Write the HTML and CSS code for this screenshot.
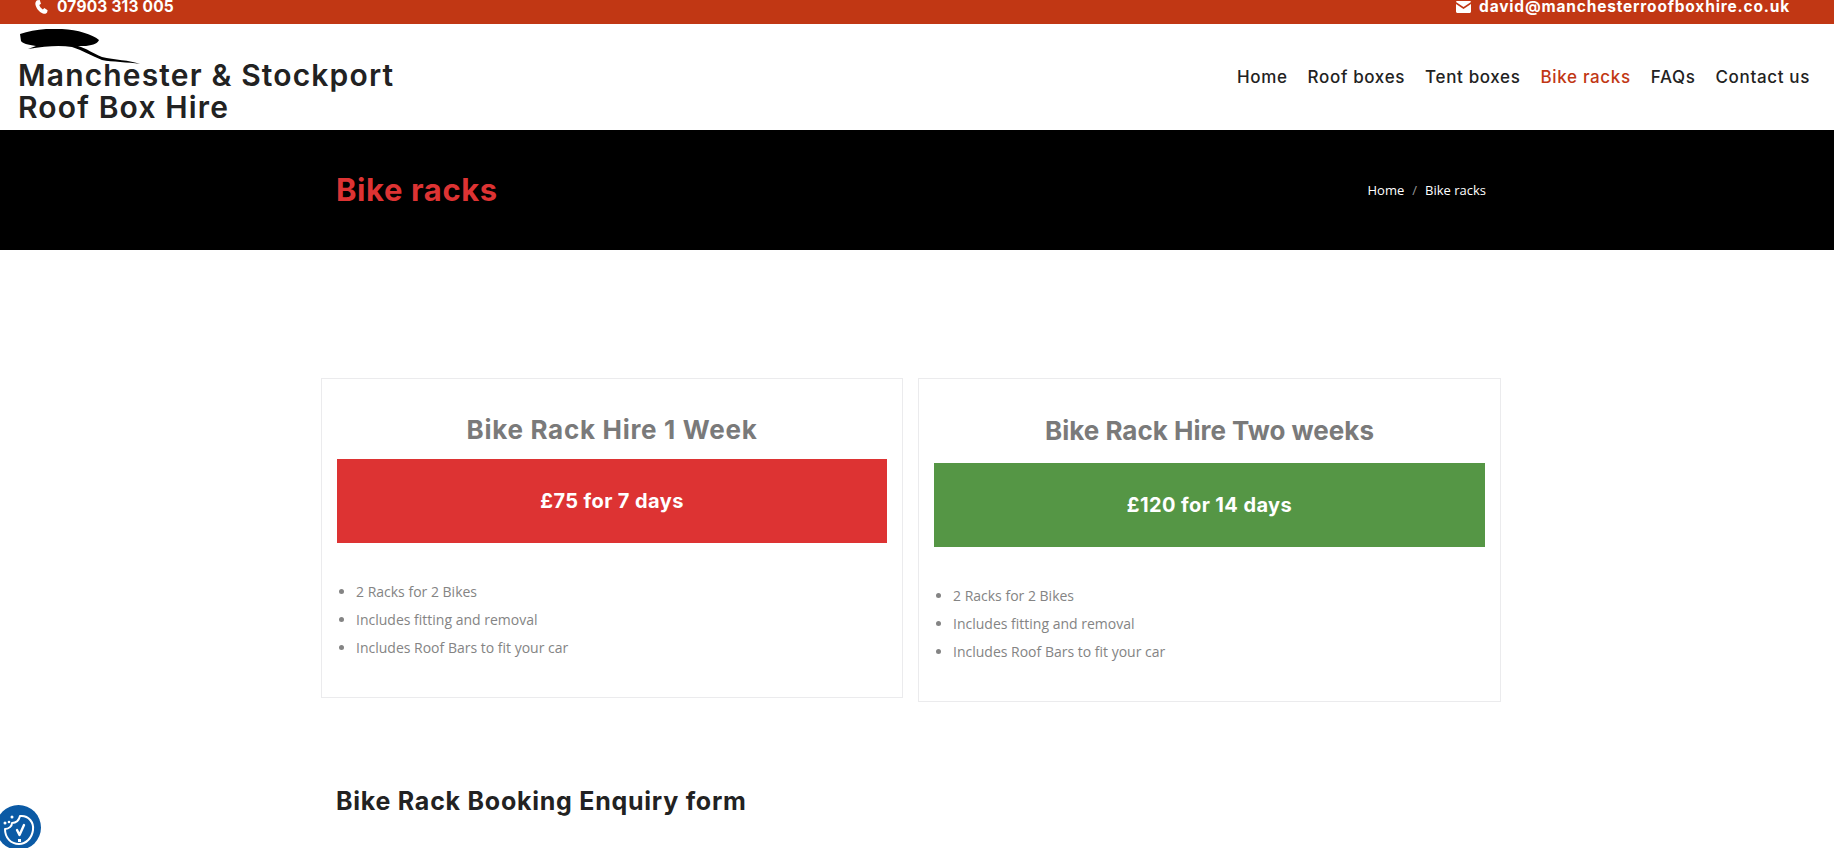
FILE: index.html
```html
<!DOCTYPE html>
<html lang="en">
<head>
    <meta charset="UTF-8">
    <meta name="viewport" content="width=device-width, initial-scale=1.0">
    <title>Bike racks - Manchester &amp; Stockport Roof Box Hire</title>
    <link rel="stylesheet" href="styles.css">
</head>
<body>
    <div class="top-bar">
        <a class="top-link top-phone" href="#">
            <svg class="top-icon" viewBox="0 0 16 16"><path d="M3.2 0.2 L6 0 L7.4 4.2 L5.5 5.8 C6 7.8 7.6 9.8 9.6 10.8 L11.2 9.2 L15 11.6 L14.4 14.2 C13.4 15.8 11.4 16.2 9.6 15.4 C5 13.4 1.8 9.2 1 4.8 C.8 2.8 1.6 1 3.2 0.2 Z"/></svg>
            07903 313 005
        </a>
        <a class="top-link top-mail" href="#">
            <svg class="top-icon" viewBox="0 0 16 13"><path d="M1.4 0 H14.6 C15.4 0 16 .6 16 1.2 L8 6.6 L0 1.2 C0 .6 .6 0 1.4 0 Z M0 3.2 L8 8.6 L16 3.2 V11.4 C16 12.3 15.3 13 14.4 13 H1.6 C.7 13 0 12.3 0 11.4 Z"/></svg>
            david@manchesterroofboxhire.co.uk
        </a>
    </div>

    <header class="site-header">
        <a class="logo" href="#">
            <svg class="logo-mark" viewBox="0 0 120 35"><path d="M0 5 C12 1 26 -1 42 0 C58 1 72 5 79 11 C78 14 74 16 66 17 C60 17 58 17 58 17 C66 19 74 25 82 28 C94 31 110 31 120 35 C108 33 92 33 82 31 C72 27 62 21 52 18 C40 16 26 17 8 20 L16 17 C8 16 2 14 1 12 Z"/></svg>
            <span class="logo-text">Manchester &amp; Stockport<br>Roof Box Hire</span>
        </a>
        <nav class="main-nav">
            <a href="#">Home</a>
            <a href="#">Roof boxes</a>
            <a href="#">Tent boxes</a>
            <a class="active" href="#">Bike racks</a>
            <a href="#">FAQs</a>
            <a href="#">Contact us</a>
        </nav>
    </header>

    <section class="page-banner">
        <div class="banner-inner">
            <h1>Bike racks</h1>
            <div class="breadcrumb"><a href="#">Home</a><span class="sep">/</span><span>Bike racks</span></div>
        </div>
    </section>

    <main class="content">
        <div class="price-row">
            <div class="price-card">
                <h3 class="card-title">Bike Rack Hire 1 Week</h3>
                <div class="price-box red">£75 for 7 days</div>
                <ul class="feature-list">
                    <li>2 Racks for 2 Bikes</li>
                    <li>Includes fitting and removal</li>
                    <li>Includes Roof Bars to fit your car</li>
                </ul>
            </div>
            <div class="price-card second">
                <h3 class="card-title">Bike Rack Hire Two weeks</h3>
                <div class="price-box green">£120 for 14 days</div>
                <ul class="feature-list">
                    <li>2 Racks for 2 Bikes</li>
                    <li>Includes fitting and removal</li>
                    <li>Includes Roof Bars to fit your car</li>
                </ul>
            </div>
        </div>
        <h2 class="form-title">Bike Rack Booking Enquiry form</h2>
    </main>

    <button class="cookie-btn" aria-label="Cookie settings">
        <svg viewBox="0 0 45 45" fill="none" stroke="#fff" stroke-width="2" stroke-linecap="round" stroke-linejoin="round">
            <path d="M24 11 C33 10 38 18 37 25 C36 33 30 39 23 39 C15 39 9 33 9 24 C13 24 16 21 16 18 C20 18 23 15 24 11 Z"/>
            <path d="M21 25 L23.5 30 L28 20" stroke-width="2.4"/>
            <rect x="22" y="34" width="3" height="3" fill="#fff" stroke="none"/>
            <circle cx="16" cy="12" r="1.5" fill="#fff" stroke="none"/>
            <circle cx="13" cy="17" r="1.3" fill="#fff" stroke="none"/>
            <circle cx="9" cy="18" r="1.5" fill="#fff" stroke="none"/>
        </svg>
    </button>
</body>
</html>
```

FILE: styles.css
```css
html, body {
    height: 848px;
    overflow: hidden;
}
body {
    margin: 0;
    font-family: Inter, "Liberation Sans", sans-serif;
    color: #222;
    background-color: #fff;
}
a {
    color: inherit;
    text-decoration: none;
}
.top-bar {
    height: 24px;
    background-color: #c13714;
    color: #fff;
    display: flex;
    justify-content: space-between;
    padding: 0 44px 0 34px;
}
.top-link {
    display: flex;
    align-items: center;
    gap: 8px;
    height: 13px;
    line-height: 13px;
    font-size: 15.5px;
    font-weight: 700;
    letter-spacing: 0.2px;
}
.top-mail {
    letter-spacing: 0.82px;
}
.top-icon {
    width: 15px;
    height: 14px;
    fill: #fff;
}
.site-header {
    height: 106px;
    display: flex;
    justify-content: space-between;
    align-items: center;
    padding: 0 24px 0 18px;
}
.logo {
    display: block;
    align-self: flex-start;
    padding-top: 5px;
}
.logo-mark {
    display: block;
    width: 120px;
    height: 35px;
    margin: 0 0 -5px 2px;
    fill: #000;
}
.logo-text {
    display: block;
    font-size: 30px;
    line-height: 32px;
    font-weight: 600;
    letter-spacing: 1.15px;
    color: #222;
}
.main-nav {
    display: flex;
    gap: 20px;
    font-size: 17px;
    font-weight: 500;
    letter-spacing: 0.65px;
}
.main-nav .active {
    color: #c13714;
}
.page-banner {
    height: 120px;
    background-color: #000;
    color: #fff;
    display: flex;
    align-items: center;
}
.banner-inner {
    width: 1150px;
    margin-left: 336px;
    display: flex;
    justify-content: space-between;
    align-items: center;
}
.page-banner h1 {
    margin: 0 0 1px;
    color: #dd3333;
    font-size: 31px;
    font-weight: 700;
    letter-spacing: 0.6px;
}
.breadcrumb {
    font-family: "Open Sans", sans-serif;
    font-size: 13px;
}
.breadcrumb .sep {
    margin: 0 8px;
    color: #999;
}
.content {
    width: 1180px;
    margin-left: 321px;
    padding-top: 128px;
}
.price-row {
    display: flex;
    align-items: flex-start;
    gap: 15px;
}
.price-card {
    flex: 0 0 582px;
    box-sizing: border-box;
    border: 1px solid #ebebed;
    padding: 33px 15px 35px;
}
.price-card.second {
    flex-basis: 583px;
    padding: 34px 15px 35px;
}
.card-title {
    margin: 0 0 12px;
    text-align: center;
    color: #7a7a7a;
    font-size: 26px;
    line-height: 35px;
    font-weight: 700;
    letter-spacing: 0.7px;
}
.second .card-title {
    margin-bottom: 15px;
    letter-spacing: 0;
}
.price-box {
    height: 84px;
    display: flex;
    align-items: center;
    justify-content: center;
    color: #fff;
    font-size: 20px;
    font-weight: 700;
    letter-spacing: 0.4px;
}
.price-box.red {
    background-color: #dd3333;
}
.price-box.green {
    background-color: #559645;
}
.feature-list {
    margin: 35px 0 0;
    padding: 0 0 0 19px;
    font-family: "Open Sans", sans-serif;
    font-size: 14px;
    line-height: 28px;
    color: #848484;
}
.form-title {
    margin: 83px 0 0;
    padding-left: 15px;
    font-size: 25px;
    line-height: 32px;
    font-weight: 700;
    letter-spacing: 0.75px;
    color: #222;
}
.cookie-btn {
    position: fixed;
    left: -4px;
    bottom: -2px;
    width: 45px;
    height: 45px;
    padding: 0;
    border: none;
    border-radius: 50%;
    background-color: #0b5aa5;
}
.cookie-btn svg {
    display: block;
    width: 45px;
    height: 45px;
}
```
